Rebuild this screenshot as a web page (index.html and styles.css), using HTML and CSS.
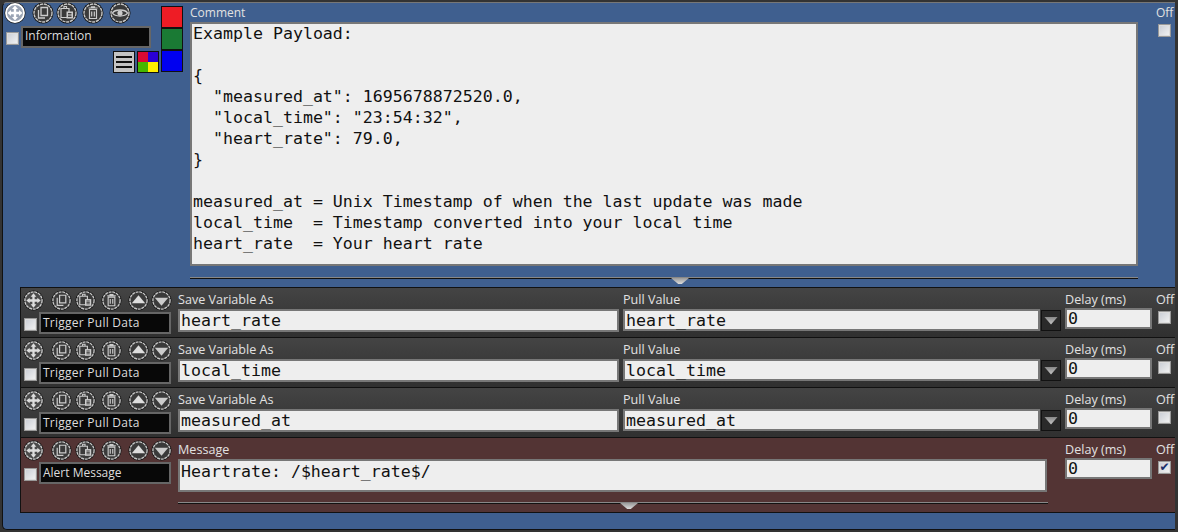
FILE: index.html
```html
<!DOCTYPE html>
<html lang="en">
<head>
<meta charset="utf-8">
<title>Action list</title>
<link rel="stylesheet" href="styles.css">
</head>
<body>
<svg class="defs" width="0" height="0" aria-hidden="true">
  <defs>
    <symbol id="base" viewBox="0 0 22 22">
      <circle cx="11" cy="11" r="10.5" fill="#111"/>
      <circle cx="11" cy="11" r="9" fill="#3a3a3a" stroke="#c8c8c8" stroke-width="1.4" stroke-dasharray="3.2 .7"/>
    </symbol>
    <symbol id="i-move" viewBox="0 0 22 22">
      <circle cx="11" cy="11" r="10.5" fill="#111"/>
      <circle cx="11" cy="11" r="9" fill="#4a4a4a" stroke="#d0d0d0" stroke-width="1.4" stroke-dasharray="3.2 .7"/>
      <path d="M11 3.5 14 7H12.2V9.8H15V8L18.5 11 15 14V12.2H12.2V15H14L11 18.5 8 15H9.8V12.2H7V14L3.5 11 7 8V9.8H9.8V7H8Z" fill="#ddd"/>
    </symbol>
    <symbol id="i-move-top" viewBox="0 0 22 22">
      <circle cx="11" cy="11" r="10.5" fill="#111"/>
      <circle cx="11" cy="11" r="9" fill="#9aa4b4" stroke="#fff" stroke-width="1.8"/>
      <path d="M11 3.5 14 7H12.2V9.8H15V8L18.5 11 15 14V12.2H12.2V15H14L11 18.5 8 15H9.8V12.2H7V14L3.5 11 7 8V9.8H9.8V7H8Z" fill="#fff"/>
    </symbol>
    <symbol id="i-copy" viewBox="0 0 22 22">
      <use href="#base"/>
      <path d="M9 5.5H15.5V13.5H9ZM6.5 8V16H13" fill="none" stroke="#ccc" stroke-width="1.3"/>
    </symbol>
    <symbol id="i-paste" viewBox="0 0 22 22">
      <use href="#base"/>
      <path d="M5 6.5H13V15.5H5ZM8 4.5H10.5V6.5H8Z" fill="none" stroke="#ccc" stroke-width="1.2"/>
      <path d="M10.5 9.5H17V16.5H10.5Z" fill="#ccc"/>
      <path d="M12 11.5H15.5M12 13H15.5M12 14.5H15.5" stroke="#222" stroke-width=".8"/>
    </symbol>
    <symbol id="i-trash" viewBox="0 0 22 22">
      <use href="#base"/>
      <path d="M7.5 7.5H14.5V16.5H7.5ZM6.5 6H15.5M9.5 6V4.8H12.5V6M9.7 9.5V14.5M12.3 9.5V14.5" fill="none" stroke="#ccc" stroke-width="1.2"/>
    </symbol>
    <symbol id="i-eye" viewBox="0 0 22 22">
      <use href="#base"/>
      <path d="M3.5 11C6 7 16 7 18.5 11 16 15 6 15 3.5 11Z" fill="none" stroke="#ccc" stroke-width="1.4"/>
      <circle cx="11" cy="11" r="2.6" fill="#ccc"/>
    </symbol>
    <symbol id="i-up" viewBox="0 0 22 22">
      <use href="#base"/>
      <path d="M11 5.5 18 14H4Z" fill="#ddd"/>
    </symbol>
    <symbol id="i-down" viewBox="0 0 22 22">
      <use href="#base"/>
      <path d="M4 8H18L11 16.5Z" fill="#ccc"/>
    </symbol>
  </defs>
</svg>

<main class="panel">
  <section class="info">
    <div class="info-left">
      <div class="tools tools-top">
        <svg class="ic"><use href="#i-move-top"/></svg>
        <svg class="ic gap6"><use href="#i-copy"/></svg>
        <svg class="ic gap2"><use href="#i-paste"/></svg>
        <svg class="ic gap4"><use href="#i-trash"/></svg>
        <svg class="ic gap5"><use href="#i-eye"/></svg>
      </div>
      <div class="name-line">
        <span class="check"></span>
        <div class="name name-top">Information</div>
      </div>
      <div class="style-btns">
        <span class="menu-btn"><i></i><i></i><i></i></span>
        <span class="palette"><i class="p1"></i><i class="p2"></i><i class="p3"></i><i class="p4"></i></span>
      </div>
    </div>
    <div class="swatches">
      <span class="swatch red"></span>
      <span class="swatch green"></span>
      <span class="swatch blue"></span>
    </div>
    <div class="comment">
      <div class="label top-label">Comment</div>
      <div class="box comment-box"><div class="comment-text">Example Payload:

{
  "measured_at": 1695678872520.0,
  "local_time": "23:54:32",
  "heart_rate": 79.0,
}

measured_at = Unix Timestamp of when the last update was made
local_time  = Timestamp converted into your local time
heart_rate  = Your heart rate</div></div>
      <div class="divider"><span class="handle"></span></div>
    </div>
    <div class="off off-top">
      <div class="label top-label">Off</div>
      <span class="check"></span>
    </div>
  </section>

  <section class="row">
    <div class="row-left">
      <div class="tools">
        <svg class="ic small"><use href="#i-move"/></svg>
        <svg class="ic small g1"><use href="#i-copy"/></svg>
        <svg class="ic small g2"><use href="#i-paste"/></svg>
        <svg class="ic small g3"><use href="#i-trash"/></svg>
        <svg class="ic small g4"><use href="#i-up"/></svg>
        <svg class="ic small g5"><use href="#i-down"/></svg>
      </div>
      <div class="name-line">
        <span class="check"></span>
        <div class="name wide-name">Trigger Pull Data</div>
      </div>
    </div>
    <div class="field f-save"><div class="label">Save Variable As</div><div class="box input">heart_rate</div></div>
    <div class="field f-pull"><div class="label">Pull Value</div><div class="select-line"><div class="box input grow">heart_rate</div><span class="drop"><i></i></span></div></div>
    <div class="field f-delay"><div class="label">Delay (ms)</div><div class="box input short">0</div></div>
    <div class="off"><div class="label">Off</div><span class="check"></span></div>
  </section>

  <section class="row">
    <div class="row-left">
      <div class="tools">
        <svg class="ic small"><use href="#i-move"/></svg>
        <svg class="ic small g1"><use href="#i-copy"/></svg>
        <svg class="ic small g2"><use href="#i-paste"/></svg>
        <svg class="ic small g3"><use href="#i-trash"/></svg>
        <svg class="ic small g4"><use href="#i-up"/></svg>
        <svg class="ic small g5"><use href="#i-down"/></svg>
      </div>
      <div class="name-line">
        <span class="check"></span>
        <div class="name wide-name">Trigger Pull Data</div>
      </div>
    </div>
    <div class="field f-save"><div class="label">Save Variable As</div><div class="box input">local_time</div></div>
    <div class="field f-pull"><div class="label">Pull Value</div><div class="select-line"><div class="box input grow">local_time</div><span class="drop"><i></i></span></div></div>
    <div class="field f-delay"><div class="label">Delay (ms)</div><div class="box input short">0</div></div>
    <div class="off"><div class="label">Off</div><span class="check"></span></div>
  </section>

  <section class="row">
    <div class="row-left">
      <div class="tools">
        <svg class="ic small"><use href="#i-move"/></svg>
        <svg class="ic small g1"><use href="#i-copy"/></svg>
        <svg class="ic small g2"><use href="#i-paste"/></svg>
        <svg class="ic small g3"><use href="#i-trash"/></svg>
        <svg class="ic small g4"><use href="#i-up"/></svg>
        <svg class="ic small g5"><use href="#i-down"/></svg>
      </div>
      <div class="name-line">
        <span class="check"></span>
        <div class="name wide-name">Trigger Pull Data</div>
      </div>
    </div>
    <div class="field f-save"><div class="label">Save Variable As</div><div class="box input">measured_at</div></div>
    <div class="field f-pull"><div class="label">Pull Value</div><div class="select-line"><div class="box input grow">measured_at</div><span class="drop"><i></i></span></div></div>
    <div class="field f-delay"><div class="label">Delay (ms)</div><div class="box input short">0</div></div>
    <div class="off"><div class="label">Off</div><span class="check"></span></div>
  </section>

  <section class="row alert">
    <div class="row-left">
      <div class="tools">
        <svg class="ic small"><use href="#i-move"/></svg>
        <svg class="ic small g1"><use href="#i-copy"/></svg>
        <svg class="ic small g2"><use href="#i-paste"/></svg>
        <svg class="ic small g3"><use href="#i-trash"/></svg>
        <svg class="ic small g4"><use href="#i-up"/></svg>
        <svg class="ic small g5"><use href="#i-down"/></svg>
      </div>
      <div class="name-line">
        <span class="check"></span>
        <div class="name">Alert Message</div>
      </div>
    </div>
    <div class="field f-msg">
      <div class="label">Message</div>
      <div class="box input msg">Heartrate: /$heart_rate$/</div>
      <div class="divider"><span class="handle"></span></div>
    </div>
    <div class="field f-delay f-delay-alert"><div class="label">Delay (ms)</div><div class="box input short">0</div></div>
    <div class="off"><div class="label">Off</div><span class="check on">&#10004;</span></div>
  </section>
</main>
</body>
</html>
```

FILE: styles.css
```css
* { box-sizing: border-box; }
html, body { margin: 0; height: 532px; overflow: hidden; }
body {
  background: #333;
  font-family: "Open Sans", "Noto Sans", sans-serif;
  font-size: 12px;
  color: #ddd;
  padding: 2px 3px 2px 2px;
}
.defs { position: absolute; }

.panel {
  height: 528px;
  background: #3f5f8f;
  border-left: 1px solid #111;
  border-top: 1px solid #777;
  border-bottom: 1px solid #111;
  border-radius: 5px 0 0 5px;
  display: flex;
  flex-direction: column;
}

.label { font-size: 12.6px; line-height: 16px; color: #e2e2e2; white-space: nowrap; }
.top-label { font-size: 12px; }

.box {
  background: #eee;
  border: 2px solid #777;
  font-family: "DejaVu Sans Mono", monospace;
  font-size: 16.6px;
  color: #111;
  white-space: pre;
}

/* top block */
.info { display: flex; height: 284px; flex: none; }
.info-left { width: 155px; margin-left: 1px; flex: none; }
.tools { display: flex; align-items: center; height: 22px; }
.tools-top { height: 20px; }
.ic { width: 22px; height: 22px; flex: none; display: block; }
.gap6 { margin-left: 6px; }
.gap2 { margin-left: 2px; }
.gap4 { margin-left: 4px; }
.gap5 { margin-left: 5px; }
.small { width: 21px; height: 21px; }
.g1 { margin-left: 7px; }
.g2 { margin-left: 3px; }
.g3 { margin-left: 5px; }
.g4 { margin-left: 6px; }
.g5 { margin-left: 2px; }

.name-line { display: flex; align-items: center; gap: 2px; }
.check {
  width: 13px;
  height: 13px;
  flex: none;
  display: block;
  border: 1px solid #999;
  background: linear-gradient(135deg, #c8ccd4, #f4f4f4);
  box-shadow: inset 0 0 0 1px #ddd;
}
.check.on {
  color: #1c2f6a;
  font: bold 12px/11px "DejaVu Sans", sans-serif;
  text-align: center;
}
.name {
  background: #080808;
  border: 2px solid #666;
  color: #ddd;
  font-size: 12px;
  line-height: 17px;
  padding-left: 2px;
  height: 22px;
  white-space: nowrap;
}
.wide-name { letter-spacing: .25px; }
.name-line .check { margin-top: 2px; }
.name-top { width: 130px; line-height: 15px; }
.tools-top + .name-line { margin-top: 3px; padding-left: 2px; }

.style-btns { display: flex; justify-content: flex-end; gap: 2px; margin-top: 3px; }
.menu-btn {
  width: 22px;
  height: 22px;
  background: #c4c4c4;
  border: 1px solid #111;
  display: flex;
  flex-direction: column;
  justify-content: center;
  gap: 3px;
  padding: 0 2px;
}
.menu-btn i { display: block; height: 2px; background: #111; }
.palette {
  width: 22px;
  height: 22px;
  border: 1px solid #111;
  display: grid;
  grid-template-columns: 1fr 1fr;
  grid-template-rows: 1fr 1fr;
}
.palette i { display: block; }
.p1 { background: #dc0a32; }
.p2 { background: #2a00d6; }
.p3 { background: #46b800; }
.p4 { background: #ffee00; }

.swatches { display: flex; flex-direction: column; width: 22px; margin-left: 2px; padding-top: 3px; flex: none; }
.swatch { height: 22px; border: 1px solid #111; display: block; }
.red { background: #ee1c25; }
.green { background: #1a7a34; }
.blue { background: #0000f0; }

.comment { width: 948px; margin-left: 7px; flex: none; padding-top: 2px; }
.comment-box { height: 244px; line-height: 21px; padding: 0 1px; margin-top: 1px; }
.comment-text { margin-top: -1px; }
.divider { position: relative; border-top: 1px solid #888; border-bottom: 1px solid #111; height: 2px; margin-top: 11px; }
.handle {
  position: absolute;
  left: 481px;
  top: 0;
  width: 18px;
  height: 6px;
  background: linear-gradient(#999, #ddd);
  clip-path: polygon(0 0, 100% 0, 60% 100%, 40% 100%);
}

.off { width: 20px; flex: none; }
.off-top { margin-left: 18px; padding-top: 2px; }
.off-top .check { margin: 3px 0 0 2px; }
.row .off { margin-left: 4px; padding-top: 2px; }
.row .off .check { margin: 3px 0 0 2px; }

/* rows */
.row {
  height: 50px;
  flex: none;
  margin-left: 17px;
  padding-top: 2px;
  display: flex;
  background: linear-gradient(#444, #303030);
  border-top: 1px solid #111;
  border-left: 1px solid #111;
}
.row-left { width: 157px; flex: none; padding-left: 2px; }
.row-left .tools { height: 20px; }
.row-left .name-line { margin-top: 2px; gap: 2px; padding-left: 1px; }
.row-left .name { width: 132px; }

.field { flex: none; padding-top: 2px; }
.f-save { width: 441px; }
.f-pull { width: 438px; margin-left: 4px; }
.f-delay { width: 87px; margin-left: 4px; }
.input { height: 23px; line-height: 19px; padding: 0 1px; margin-top: 1px; }
.short { height: 21px; line-height: 18px; margin-top: 0; }
.select-line { display: flex; gap: 1px; }
.grow { width: 417px; height: 22px; }
.drop {
  width: 20px;
  height: 21px;
  margin-top: 2px;
  background: #2a2a2a;
  border: 1px solid #111;
  display: flex;
  align-items: center;
  justify-content: center;
}
.drop i {
  display: block;
  width: 14px;
  height: 8px;
  background: linear-gradient(#888, #ccc);
  clip-path: polygon(0 0, 100% 0, 50% 100%);
}

.alert {
  height: 76px;
  background: #533434;
  border-bottom: 1px solid #111;
}
.f-msg { width: 870px; }
.msg { height: 33px; width: 869px; line-height: 22px; }
.f-msg .divider { margin-top: 10px; }
.f-msg .handle { left: 442px; }
.f-delay-alert { margin-left: 17px; }
```
